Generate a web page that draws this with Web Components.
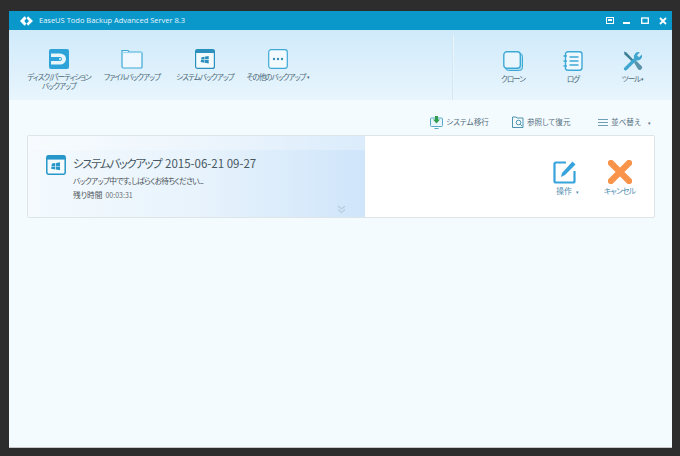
<!DOCTYPE html>
<html lang="ja"><head><meta charset="utf-8"><title>EaseUS Todo Backup</title>
<style>
html,body{margin:0;padding:0;width:680px;height:456px;overflow:hidden;background:#2d2d2d}
body{font-family:"Noto Sans CJK JP","Liberation Sans",sans-serif}
</style></head><body>
<app-desktop>
<app-window>
<title-bar slot="title">EaseUS Todo Backup Advanced Server 8.3</title-bar>
<tool-bar slot="tools">
  <div slot="left" style="display:contents">
  <tool-btn label="ディスク/パーティション バックアップ" width="73"><svg width="20" height="20" viewBox="0 0 20 20"><rect width="20" height="20" rx="2" fill="#2ea3d9"/><path d="M2 4.500h9a6 5.500 0 0 1 0 11H2V12h9a2 2 0 0 0 0-4H2z" fill="#e8f6fc"/><circle cx="11" cy="10" r="1" fill="#e8f6fc"/></svg></tool-btn>
  <tool-btn label="ファイルバックアップ" width="73"><svg width="22" height="20" viewBox="0 0 22 20" fill="none" stroke="#3fa9d6" stroke-width="1.200"><path d="M1 17.500V1.500h6l1.200 1.600H20a1 1 0 0 1 1 1V18a1 1 0 0 1-1 1H2.500A1.500 1.500 0 0 1 1 17.500z" fill="#eef8fe"/><path d="M1 3.500h20" stroke="#9ad3ee"/></svg></tool-btn>
  <tool-btn label="システムバックアップ" width="73"><svg width="20" height="20" viewBox="0 0 20 20"><rect x=".6" y=".6" width="18.800" height="18.800" rx="2" fill="#f2fafe" stroke="#2b90bd" stroke-width="1.200"/><rect x=".6" y=".6" width="18.800" height="3.400" fill="#2b90bd"/><g fill="#2b90bd"><path d="M6.500 8.200l3-.5v2.700h-3.500zM10.200 7.600l3.500-.6v3.300h-3.800zM6 11h3.500v2.700l-3.900-.6zM10 11h3.700v3.400l-3.800-.6z"/></g></svg></tool-btn>
  <tool-btn label="その他のバックアップ" width="73" caret><svg width="20" height="20" viewBox="0 0 20 20"><rect x=".7" y=".7" width="18.600" height="18.600" rx="2.500" fill="#f2fafe" stroke="#3fa9d6" stroke-width="1.200"/><g fill="#3a8fb5"><circle cx="6" cy="10" r="1.200"/><circle cx="10" cy="10" r="1.200"/><circle cx="14" cy="10" r="1.200"/></g></svg></tool-btn>
  </div>
  <div slot="right" style="display:contents">
  <tool-btn label="クローン" width="60"><svg width="20" height="20" viewBox="0 0 20 20"><rect x="2.500" y="2.500" width="17" height="17" rx="3" fill="#a8dcf2" stroke="#3fa9d6"/><rect x=".8" y=".8" width="16.500" height="16.500" rx="3" fill="#eaf6fd" stroke="#3fa9d6" stroke-width="1.400"/></svg></tool-btn>
  <tool-btn label="ログ" width="60"><svg width="20" height="20" viewBox="0 0 20 20" fill="none" stroke="#3fa9d6"><rect x="2.500" y=".8" width="16.500" height="18.400" rx="2.500" stroke-width="1.400" fill="#eef8fe"/><path d="M6.500 6h9M6.500 10h9M6.500 14h9" stroke-width="1.300"/><path d="M.5 5h3.500M.5 10h3.500M.5 15h3.500" stroke-width="1.300"/></svg></tool-btn>
  <tool-btn label="ツール" width="60" caret><svg width="20" height="20" viewBox="0 0 20 20"><path d="M1 .5l2.500 1 8 8.500-1.500 1.500-8.500-8z" fill="#3f7f98"/><path d="M11 11.500l2-2 5.500 5.500c1 1 1 2-.2 3.200-1.100 1.100-2.300 1.100-3.300.1z" fill="#5a93aa"/><path d="M18.800 3.500l-2.800 2.700-2-2 2.800-2.800a4.400 4.400 0 0 0-5.600 5.600L1.500 16.500c-1 1-.8 1.800 0 2.500s1.500.8 2.500-.2l9.600-9.500a4.400 4.400 0 0 0 5.200-5.800z" fill="#3ea6cf"/></svg></tool-btn>
  </div>
</tool-bar>
<action-row slot="actions">
  <action-link width="82" label="システム移行"><svg width="13" height="13" viewBox="0 0 13 13"><rect x=".5" y="2" width="12" height="8.500" rx="1" fill="#eaf6fd" stroke="#56a9c6"/><path d="M5 0h3v3.500h2l-3.500 4-3.500-4h2z" fill="#2f9e4f"/><path d="M4.500 12.500h4" stroke="#56a9c6"/></svg></action-link>
  <action-link width="86" label="参照して復元"><svg width="12" height="12" viewBox="0 0 12 12" fill="none" stroke="#4b93ae"><path d="M.5 11.500V1h3.500l1 1h6v9.500z" fill="#f4fbff"/><circle cx="6.500" cy="6.500" r="2.300"/><path d="M8.200 8.200l2 2"/></svg></action-link>
  <action-link width="62" label="並べ替え" caret><svg width="10" height="9" viewBox="0 0 10 9" stroke="#6f9fb5"><path d="M0 1.500h10M0 4.500h10M0 7.500h10"/></svg></action-link>
</action-row>
<task-card slot="main"
  kana="システムバックアップ" stamp="2015-06-21 09-27"
  status="バックアップ中です。しばらくお待ちください..."
  remain="残り時間" time="00:03:31"></task-card>
</app-window>
</app-desktop>
<script>
function def(name, css, html){
  customElements.define(name, class extends HTMLElement{
    connectedCallback(){
      if(this.shadowRoot) return;
      const r=this.attachShadow({mode:'open'});
      r.innerHTML='<style>'+css+'</style>'+(typeof html==='function'?html(this):html);
    }
  });
}
const a=(e,n)=>e.getAttribute(n)||'';
const JP='"Noto Sans CJK JP",sans-serif';
def('app-desktop',':host{display:block;padding:11px 8px 9px 9px;box-sizing:border-box;height:456px}','<slot></slot>');
def('app-window',`:host{display:flex;flex-direction:column;height:436px;background:#f4fbff;box-shadow:0 1px 0 #c9c9c9}`,
 '<slot name="title"></slot><slot name="tools"></slot><slot name="actions"></slot><slot name="main"></slot>');
def('title-bar',`:host{display:flex;align-items:center;height:19px;background:#0a98cb;color:#e6f6fc;font:400 7.500px/1 "Open Sans",sans-serif;padding:0 5px 0 11px;flex:none}
 .t{margin-left:6px;flex:1;white-space:nowrap}
 .b{display:flex;align-items:center}
 .b svg{display:block}`,
 `<svg width="13" height="10" viewBox="0 0 13 10"><path d="M4.500.3L0 5l4.500 4.700L6.500 7.800 4.300 5l2.200-2.800zM8 .3L6.700 2.500 9 5 6.700 7.500 8 9.700 13 5z" fill="#fff"/></svg><span class="t"><slot></slot></span>
 <span class="b">
 <svg width="8" height="7" viewBox="0 0 8 7" style="margin-right:9px"><rect x=".5" y=".5" width="7" height="6" fill="none" stroke="#fff"/><rect x="2" y="2" width="4" height="2" fill="#fff"/></svg>
 <svg width="8" height="7" viewBox="0 0 8 7" style="margin-right:10px"><rect x="0" y="5" width="7" height="2" fill="#fff"/></svg>
 <svg width="8" height="7" viewBox="0 0 8 7" style="margin-right:10px"><rect x=".7" y="1" width="6.600" height="5.300" fill="none" stroke="#fff" stroke-width="1.300"/></svg>
 <svg width="8" height="8" viewBox="0 0 8 8"><path d="M1 1l6 6M7 1L1 7" stroke="#fff" stroke-width="1.800"/></svg>
 </span>`);
def('tool-bar',`:host{display:flex;height:70px;flex:none;background:linear-gradient(#d0eafa,#e8f5fd);padding-left:13.500px;box-sizing:border-box}
 .l{display:flex;width:429.500px;padding-top:19px;box-sizing:border-box}
 .r{display:flex;flex:1;padding:21px 0 0 30px;box-sizing:border-box}
 .d{width:1px;background:#d3e7f3;margin-top:5px;box-shadow:1px 0 0 #e9f6fd}`,
 '<div class="l"><slot name="left"></slot></div><div class="d"></div><div class="r"><slot name="right"></slot></div>');
def('tool-btn',`:host{display:flex;flex-direction:column;align-items:center;flex:none;color:#4d6a78;font:400 7.600px/9px ${JP};text-align:center;font-feature-settings:"palt"}
 .i{height:20px;display:block}.i ::slotted(svg){display:block}
 .l{margin-top:3px;white-space:pre;letter-spacing:-1px}
 .c{font-size:5px;vertical-align:1px;letter-spacing:0;margin-left:1px}`,
 e=>{e.style.width=a(e,'width')+'px';
 const lines=a(e,'label').replace(' ','\n');
 return `<span class="i"><slot></slot></span><span class="l">${lines}${e.hasAttribute('caret')?'<span class="c">▾</span>':''}</span>`});
def('action-row',`:host{display:flex;justify-content:flex-end;align-items:center;height:35px;flex:none;padding:9px 12px 0 0;box-sizing:border-box}`,'<slot></slot>');
def('action-link',`:host{display:flex;align-items:center;gap:3px;flex:none;color:#55707e;font:400 7.600px/1 ${JP};white-space:nowrap;font-feature-settings:"palt"}
 .c{font-size:5px;margin-left:4px}`,
 e=>{e.style.width=a(e,'width')+'px';return `<slot></slot><span>${a(e,'label')}</span>${e.hasAttribute('caret')?'<span class="c">▾</span>':''}`});
def('task-card',`:host{display:flex;height:83px;margin:0 17px 0 18px;box-sizing:border-box;border:1px solid #dfe4e7;border-radius:2px;background:#fff;flex:none}
 .l{width:337px;position:relative;box-sizing:border-box;padding:18px 0 0 18px;display:flex;gap:7px;
  background:linear-gradient(180deg,rgba(255,255,255,.25) 0 14px,transparent 14px),linear-gradient(90deg,#f4fafe 0,#e8f3fc 50%,#cfe5fa 100%)}
 .ic{flex:none;display:block;margin-top:1px}
 h2{margin:1px 0 0;font:400 11.500px/16px ${JP};color:#47575f;white-space:nowrap;font-feature-settings:"palt"}
 h2 b{font-weight:400;letter-spacing:-1.400px;margin-right:1px}
 p{margin:0;font:400 7.700px/11px ${JP};color:#4a5257;white-space:nowrap;font-feature-settings:"palt"}
 .s{margin-top:4px;letter-spacing:-.7px}.t{margin-top:3px}.t span{margin-left:3px;font-size:7px;color:#666e73}
 .chev{position:absolute;left:309px;bottom:3px}
 .r{flex:1;display:flex;justify-content:flex-end;padding:24px 0 0;box-sizing:border-box}
 .a{width:55px;display:flex;flex-direction:column;align-items:center;font:400 7.800px/9px ${JP};color:#4f8cb0;white-space:nowrap;font-feature-settings:"palt"}
 .a span{margin-top:2px}.a svg{display:block}
 .a:last-child{margin-right:7px}.a:last-child span{letter-spacing:-.8px}
 .a:first-child span{margin-left:6px;word-spacing:2px}
 .c{font-size:5px;font-style:normal}`,
 e=>`<div class="l"><svg class="ic" width="20" height="20" viewBox="0 0 20 20"><rect x=".8" y=".8" width="18.400" height="18.400" rx="2" fill="#f6fbfe" stroke="#2796c8" stroke-width="1.500"/><rect x=".8" y=".8" width="18.400" height="3.800" fill="#2796c8"/><path d="M6 8.500l3.300-.5v2.900H5.500zM10.100 7.900l3.900-.6v3.600h-4zM5.500 11.500h3.800v3l-4.200-.7zM10 11.500h4v3.700l-4-.6z" fill="#2796c8"/></svg>
 <div><h2><b>${a(e,'kana')}</b> ${a(e,'stamp')}</h2><p class="s">${a(e,'status')}</p><p class="t">${a(e,'remain')}<span>${a(e,'time')}</span></p></div>
 <svg class="chev" width="9" height="9" viewBox="0 0 9 9" fill="none" stroke="#b7cfe0" stroke-width="1.300"><path d="M1 1l3.500 3L8 1M1 4.500l3.500 3 3.500-3"/></svg></div>
 <div class="r"><div class="a"><svg width="24" height="24" viewBox="0 0 24 24" fill="none"><path d="M13 2.500H3A1.500 1.500 0 0 0 1.500 4v17A1.500 1.500 0 0 0 3 22.500h17a1.500 1.500 0 0 0 1.500-1.500V11" stroke="#36a3dc" stroke-width="2.200"/><path d="M8 17l1-4L19.500 1.500l3 3L12 15z" fill="#36a3dc"/></svg><span>操作 <i class="c">▾</i></span></div>
 <div class="a"><svg width="24" height="24" viewBox="0 0 24 24"><path d="M3 3l18 18M21 3L3 21" stroke="#f9944a" stroke-width="6.200" stroke-linecap="square"/></svg><span>キャンセル</span></div></div>`);
</script>
</body></html>
